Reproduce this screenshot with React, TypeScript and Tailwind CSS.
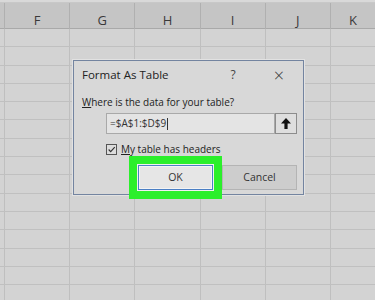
const cols = ["E", "F", "G", "H", "I", "J", "K"];
const rows = Array.from({ length: 15 }, (_, i) => i);

function Grid() {
  return (
    <div className="flex flex-col">
      <div className="h-[3px] bg-[#d9d9d9] border-b border-[#c8c8c8]" />
      <div className="grid grid-cols-[5px_repeat(5,65.2px)_1fr] h-[26px] bg-[#c5c5c5] border-b border-[#a9a9a9]">
        {cols.map((c, i) => (
          <div
            key={c}
            className={`flex items-center justify-center pt-[8px] text-[13px] text-[#3a3a3a] ${i < 6 ? "border-r border-[#b0b0b0]" : ""}`}
          >
            {i > 0 ? c : ""}
          </div>
        ))}
      </div>
      {rows.map((r) => (
        <div key={r} className="grid grid-cols-[5px_repeat(5,65.2px)_1fr] h-[18.3px] bg-[#d3d3d3] border-b border-[#c0c0c0]">
          {cols.map((c, i) => (
            <div key={c} className={i < 6 ? "border-r border-[#bfbfbf]" : ""} />
          ))}
        </div>
      ))}
    </div>
  );
}

function UpArrow() {
  return (
    <svg width="12" height="13" viewBox="0 0 12 13">
      <path d="M6 1 L11 6.5 H7.6 V12 H4.4 V6.5 H1 Z" fill="#111" />
    </svg>
  );
}

function Check() {
  return (
    <svg width="11" height="11" viewBox="0 0 11 11">
      <path d="M2 5.5 L4.5 8 L9.5 2.5" stroke="#333" strokeWidth="1.4" fill="none" />
    </svg>
  );
}

function Dialog() {
  return (
    <div className="absolute left-[73px] top-[60px] w-[231px] h-[135px] bg-[#d8d8d8] border border-[#7384a0] shadow-[0_0_0_1px_#e2e2e2] flex flex-col text-[#222]">
      <div className="flex items-center h-[28px] pl-[8px] text-[11.5px]">
        <span className="flex-1">Format As Table</span>
        <span className="w-[12px] text-center mr-[34px] text-[12px] text-[#444]">?</span>
        <span className="w-[12px] text-center mr-[18px] text-[18px] leading-none font-light text-[#333]">×</span>
      </div>
      <div className="pl-[8px] mt-[6px] text-[10px] leading-[14px]">
        <span className="underline">W</span>here is the data for your table?
      </div>
      <div className="flex ml-[32px] mt-[4px] h-[21px]">
        <div className="w-[169px] bg-[#e4e4e4] border border-[#a9a9a9] flex items-center pl-[3px] text-[10px] text-[#333]">
          =$A$1:$D$9<span className="w-px h-[12px] bg-[#333] ml-px" />
        </div>
        <div className="w-[22px] bg-[#dedede] border border-[#8c8c8c] flex items-center justify-center">
          <UpArrow />
        </div>
      </div>
      <div className="flex items-center ml-[32px] mt-[8px] gap-[4px] text-[10px] leading-[14px]">
        <div className="w-[11px] h-[11px] border border-[#555] bg-[#dcdcdc] flex items-center justify-center">
          <Check />
        </div>
        <span>
          <span className="underline">M</span>y table has headers
        </span>
      </div>
      <div className="flex ml-[64px] mt-[9px] gap-[9px]">
        <button className="relative z-10 w-[75px] h-[25px] bg-[#e6e6e6] border border-[#4b7fc4] shadow-[inset_0_0_0_1px_#f4f4f4,0_0_0_1px_#f0f0f0,0_0_0_9px_#2bef2b] text-[10.5px] text-[#333]">
          OK
        </button>
        <button className="w-[75px] h-[25px] bg-[#cdcdcd] border border-[#b4b4b4] text-[10.5px] text-[#333]">
          Cancel
        </button>
      </div>
    </div>
  );
}

export default function App() {
  return (
    <div className="relative w-[375px] h-[300px] overflow-hidden bg-[#d3d3d3] font-['Open_Sans','Noto_Sans',sans-serif]">
      <Grid />
      <Dialog />
    </div>
  );
}
